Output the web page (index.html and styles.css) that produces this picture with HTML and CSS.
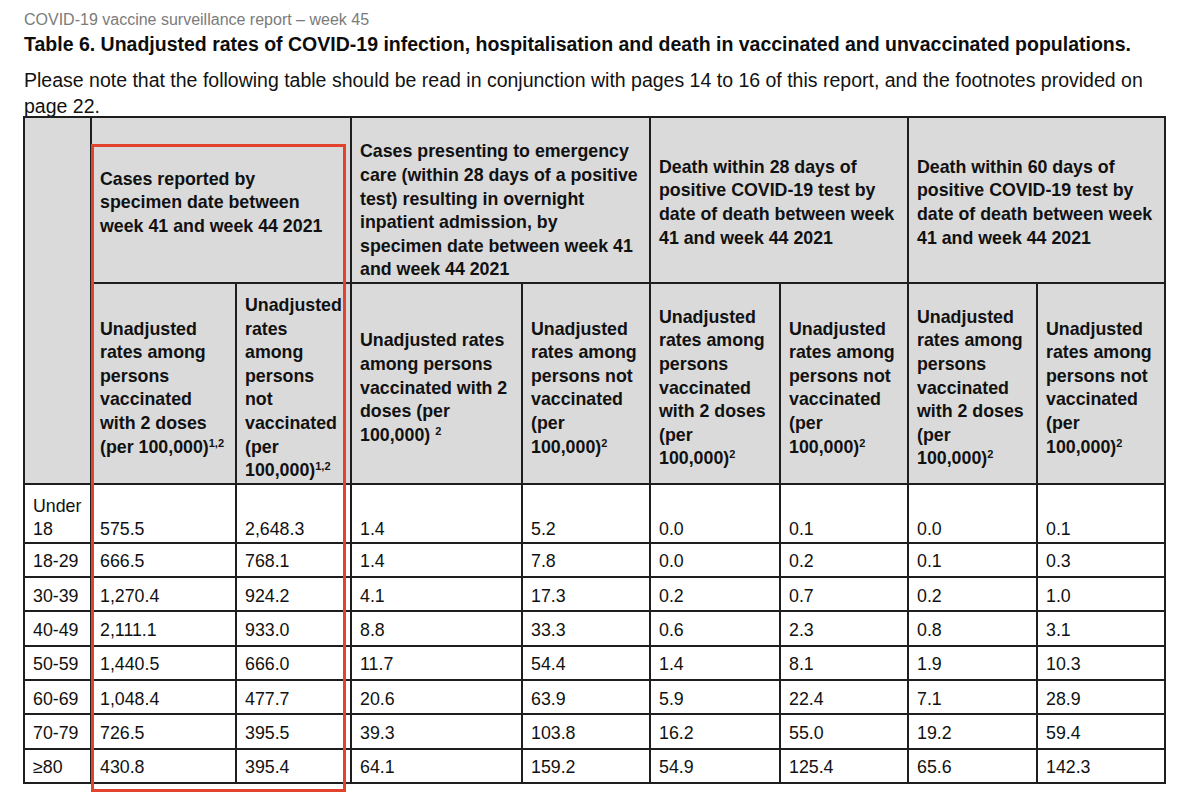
FILE: index.html
```html
<!DOCTYPE html>
<html lang="en">
<head>
<meta charset="utf-8">
<title>COVID-19 vaccine surveillance report – week 45</title>
<link rel="stylesheet" href="styles.css">
</head>
<body>
<div class="page">
  <p class="kicker">COVID-19 vaccine surveillance report – week 45</p>
  <h1 class="title">Table 6. Unadjusted rates of COVID-19 infection, hospitalisation and death in vaccinated and unvaccinated populations.</h1>
  <p class="note">Please note that the following table should be read in conjunction with pages 14 to 16 of this report, and the footnotes provided on<br>page 22.</p>
  <div class="tablewrap">
    <table class="rates">
      <colgroup>
        <col class="c-age">
        <col class="c-a">
        <col class="c-b">
        <col class="c-c">
        <col class="c-d">
        <col class="c-e">
        <col class="c-f">
        <col class="c-g">
        <col class="c-h">
      </colgroup>
      <thead>
        <tr class="hrow1">
          <th rowspan="2" class="corner"></th>
          <th colspan="2">Cases reported by<br>specimen date between<br>week 41 and week 44 2021</th>
          <th colspan="2" class="tall">Cases presenting to emergency<br>care (within 28 days of a positive<br>test) resulting in overnight<br>inpatient admission, by<br>specimen date between week 41<br>and week 44 2021</th>
          <th colspan="2">Death within 28 days of<br>positive COVID-19 test by<br>date of death between week<br>41 and week 44 2021</th>
          <th colspan="2">Death within 60 days of<br>positive COVID-19 test by<br>date of death between week<br>41 and week 44 2021</th>
        </tr>
        <tr class="hrow2">
          <th>Unadjusted<br>rates among<br>persons<br>vaccinated<br>with 2 doses<br>(per 100,000)<sup>1,2</sup></th>
          <th>Unadjusted<br>rates<br>among<br>persons<br>not<br>vaccinated<br>(per<br>100,000)<sup>1,2</sup></th>
          <th>Unadjusted rates<br>among persons<br>vaccinated with 2<br>doses (per<br>100,000) <sup>2</sup></th>
          <th>Unadjusted<br>rates among<br>persons not<br>vaccinated<br>(per<br>100,000)<sup>2</sup></th>
          <th>Unadjusted<br>rates among<br>persons<br>vaccinated<br>with 2 doses<br>(per<br>100,000)<sup>2</sup></th>
          <th>Unadjusted<br>rates among<br>persons not<br>vaccinated<br>(per<br>100,000)<sup>2</sup></th>
          <th>Unadjusted<br>rates among<br>persons<br>vaccinated<br>with 2 doses<br>(per<br>100,000)<sup>2</sup></th>
          <th>Unadjusted<br>rates among<br>persons not<br>vaccinated<br>(per<br>100,000)<sup>2</sup></th>
        </tr>
      </thead>
      <tbody>
        <tr class="first"><td>Under<br>18</td><td>575.5</td><td>2,648.3</td><td>1.4</td><td>5.2</td><td>0.0</td><td>0.1</td><td>0.0</td><td>0.1</td></tr>
        <tr><td>18-29</td><td>666.5</td><td>768.1</td><td>1.4</td><td>7.8</td><td>0.0</td><td>0.2</td><td>0.1</td><td>0.3</td></tr>
        <tr><td>30-39</td><td>1,270.4</td><td>924.2</td><td>4.1</td><td>17.3</td><td>0.2</td><td>0.7</td><td>0.2</td><td>1.0</td></tr>
        <tr><td>40-49</td><td>2,111.1</td><td>933.0</td><td>8.8</td><td>33.3</td><td>0.6</td><td>2.3</td><td>0.8</td><td>3.1</td></tr>
        <tr><td>50-59</td><td>1,440.5</td><td>666.0</td><td>11.7</td><td>54.4</td><td>1.4</td><td>8.1</td><td>1.9</td><td>10.3</td></tr>
        <tr><td>60-69</td><td>1,048.4</td><td>477.7</td><td>20.6</td><td>63.9</td><td>5.9</td><td>22.4</td><td>7.1</td><td>28.9</td></tr>
        <tr><td>70-79</td><td>726.5</td><td>395.5</td><td>39.3</td><td>103.8</td><td>16.2</td><td>55.0</td><td>19.2</td><td>59.4</td></tr>
        <tr><td>≥80</td><td>430.8</td><td>395.4</td><td>64.1</td><td>159.2</td><td>54.9</td><td>125.4</td><td>65.6</td><td>142.3</td></tr>
      </tbody>
    </table>
    <div class="highlight" aria-hidden="true"></div>
  </div>
</div>
</body>
</html>
```
FILE: styles.css
```css
html, body {
  margin: 0;
  padding: 0;
  background: #ffffff;
}

body {
  font-family: "Liberation Sans", Arial, sans-serif;
  color: #111111;
}

.page {
  padding: 10px 0 20px 24px;
}

.kicker {
  margin: 0;
  font-size: 16px;
  line-height: 20px;
  color: #7b7b7b;
}

.title {
  margin: 2px 0 0;
  font-size: 19.5px;
  line-height: 25px;
  font-weight: bold;
  color: #0d0d0d;
}

.note {
  margin: 11px 0 0;
  font-size: 19.5px;
  line-height: 25.5px;
  color: #111111;
}

.tablewrap {
  position: relative;
  width: max-content;
  margin: -3px 0 0 -1px;
  padding-bottom: 8px;
}

.rates {
  border-collapse: collapse;
  table-layout: fixed;
  font-size: 17.8px;
}

.c-age { width: 67px; }
.c-a { width: 145px; }
.c-b { width: 115px; }
.c-c { width: 171px; }
.c-d { width: 128px; }
.c-e { width: 130px; }
.c-f { width: 128px; }
.c-g { width: 129px; }
.c-h { width: 128px; }

.rates th,
.rates td {
  border: 2px solid #1e1e1e;
  padding: 0 4px 0 8px;
  text-align: left;
  white-space: nowrap;
}

.rates th {
  background: #dadada;
  font-weight: bold;
  line-height: 23.6px;
  vertical-align: middle;
}

.hrow1 { height: 166px; }
.hrow1 th { padding-top: 6px; }
.hrow1 th.tall { vertical-align: bottom; padding-top: 0; }

.hrow2 { height: 200px; }
.hrow2 th { padding-top: 10px; }

.rates sup {
  font-size: 11px;
  line-height: 0;
  vertical-align: 6px;
}

.rates td {
  line-height: 23.6px;
  vertical-align: bottom;
  padding-bottom: 2px;
  background: #ffffff;
}

.rates tbody tr { height: 34.3px; }
.rates tbody tr.first { height: 59px; }
.rates tbody tr.first td { padding-bottom: 0; }

.highlight {
  position: absolute;
  left: 68px;
  top: 28px;
  bottom: 0;
  width: 255px;
  box-sizing: border-box;
  border: 3px solid #e2432d;
  pointer-events: none;
}
```
